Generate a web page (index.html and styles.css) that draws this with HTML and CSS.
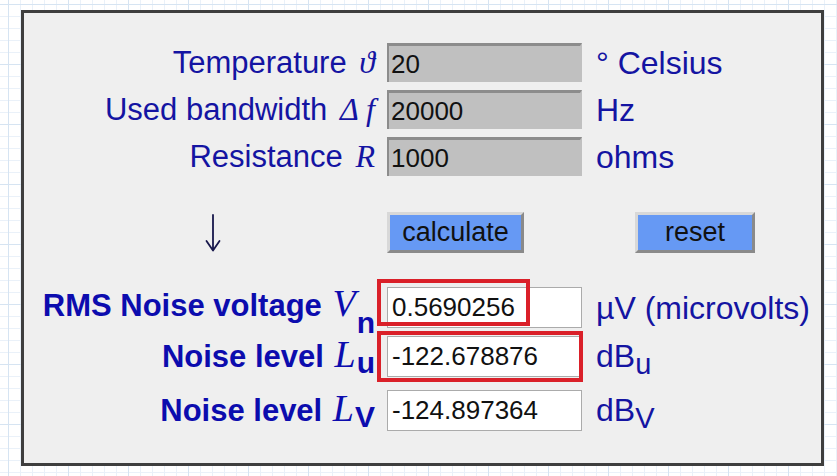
FILE: index.html
```html
<!DOCTYPE html>
<html>
<head>
<meta charset="utf-8">
<link rel="stylesheet" href="styles.css">
</head>
<body>
<div class="panel">
  <div class="row in-row">
    <div class="label">Temperature <i class="sym">ϑ</i></div>
    <input class="field field-in" type="text" value="20">
    <div class="unit">° Celsius</div>
  </div>
  <div class="row in-row gap8">
    <div class="label">Used bandwidth <i class="sym">Δ f</i></div>
    <input class="field field-in" type="text" value="20000">
    <div class="unit">Hz</div>
  </div>
  <div class="row in-row gap8">
    <div class="label">Resistance <i class="sym">R</i></div>
    <input class="field field-in" type="text" value="1000">
    <div class="unit">ohms</div>
  </div>
  <div class="row btn-row">
    <div class="arrow">
      <svg width="18" height="38" viewBox="0 0 18 38"><path d="M9 1 V36 M2.5 27 L9 36.5 L15.5 27" fill="none" stroke="#18184c" stroke-width="1.8" stroke-linecap="round" stroke-linejoin="round"/></svg>
    </div>
    <div class="cell"><button class="btn btn-calc">calculate</button></div>
    <div class="cell"><button class="btn btn-reset">reset</button></div>
  </div>
  <div class="row out-row out1">
    <div class="label bold lift-a">RMS Noise voltage <i class="sym big">V</i><span class="sub sub-deep">n</span></div>
    <input class="field field-out" type="text" value="0.5690256">
    <div class="unit">µV (microvolts)</div>
  </div>
  <div class="row out-row gap8">
    <div class="label bold lift-b">Noise level <i class="sym big">L</i><span class="sub">u</span></div>
    <input class="field field-out" type="text" value="-122.678876">
    <div class="unit">dB<span class="usub">u</span></div>
  </div>
  <div class="row out-row gap13">
    <div class="label bold lift-b">Noise level <i class="sym big">L</i><span class="sub">V</span></div>
    <input class="field field-out" type="text" value="-124.897364">
    <div class="unit">dB<span class="usub">V</span></div>
  </div>
  <div class="mark mark1"></div>
  <div class="mark mark2"></div>
</div>
</body>
</html>
```
FILE: styles.css
```css
html, body {
  margin: 0;
  padding: 0;
}
body {
  width: 837px;
  height: 476px;
  overflow: hidden;
  background-color: #ffffff;
  background-image:
    linear-gradient(to right, #d6e4f2 1px, transparent 1px),
    linear-gradient(to bottom, #d6e4f2 1px, transparent 1px),
    linear-gradient(to right, #eaf1f9 1px, transparent 1px),
    linear-gradient(to bottom, #eaf1f9 1px, transparent 1px);
  background-size: 60px 60px, 60px 60px, 12px 12px, 12px 12px;
  background-position: 8px 4px;
  font-family: "Liberation Sans", Arial, sans-serif;
}
.panel {
  position: relative;
  box-sizing: border-box;
  width: 803px;
  height: 456px;
  margin: 10px 0 0 21px;
  padding: 30px 0 0 13px;
  background: #efefef;
  border: 3px solid #3e3e3e;
}
.row {
  display: grid;
  grid-template-columns: 342px 195px 1fr;
  column-gap: 8px;
  align-items: center;
}
.in-row { grid-template-rows: 39px; }
.gap8 { margin-top: 8px; }
.gap13 { margin-top: 13px; }
.btn-row { grid-template-rows: 41px; margin-top: 36px; }
.out-row { grid-template-rows: 41px; }
.out1 { margin-top: 34px; }
.label {
  justify-self: end;
  white-space: nowrap;
  color: #1414a2;
  font-size: 31px;
  line-height: 34px;
  padding-right: 4px;
}
.label.bold {
  font-weight: bold;
  font-size: 31px;
  color: #0c0cae;
}
.lift-a { padding-bottom: 7px; }
.lift-b { padding-bottom: 3px; }
.sym {
  font-family: "Liberation Serif", "Times New Roman", serif;
  font-style: italic;
  font-weight: normal;
  font-size: 32px;
  margin-left: 4px;
}
.sym.big { font-size: 38px; margin-left: 2px; }
.sub {
  position: relative;
  top: 6px;
  font-weight: bold;
  font-size: 30px;
  margin-left: 1px;
}
.sub-deep { top: 17px; }
.unit {
  padding-left: 6px;
  white-space: nowrap;
  color: #1414a2;
  font-size: 32px;
  line-height: 34px;
}
.usub {
  position: relative;
  top: 7px;
  font-size: 29px;
}
.field {
  box-sizing: border-box;
  width: 195px;
  margin: 0;
  font-family: "Liberation Sans", Arial, sans-serif;
  font-size: 26px;
  color: #111;
  outline: none;
}
.field-in {
  height: 39px;
  padding: 0 0 0 2px;
  background: #c0c0c0;
  border-style: solid;
  border-width: 3px 2px 0 2px;
  border-color: #8c8c8c #c0c0c0 #c0c0c0 #8c8c8c;
}
.field-out {
  height: 41px;
  padding: 0 0 0 4px;
  background: #ffffff;
  border: 1px solid #ababab;
}
.arrow {
  justify-self: center;
  display: flex;
  padding-left: 10px;
}
.cell { display: flex; }
.btn {
  box-sizing: border-box;
  height: 41px;
  margin: 0;
  padding: 0;
  font-family: "Liberation Sans", Arial, sans-serif;
  font-size: 27px;
  color: #111;
  background: #6699f4;
  border-style: solid;
  border-width: 3px;
  border-color: #d8d8d8 #8a8a8a #8a8a8a #d8d8d8;
}
.btn-calc { width: 137px; }
.btn-reset { width: 120px; margin-left: 45px; }
.mark {
  position: absolute;
  box-sizing: border-box;
  border: 4px solid #da2029;
}
.mark1 { left: 353px; top: 266px; width: 153px; height: 47px; }
.mark2 { left: 353px; top: 318px; width: 206px; height: 51px; }
```
